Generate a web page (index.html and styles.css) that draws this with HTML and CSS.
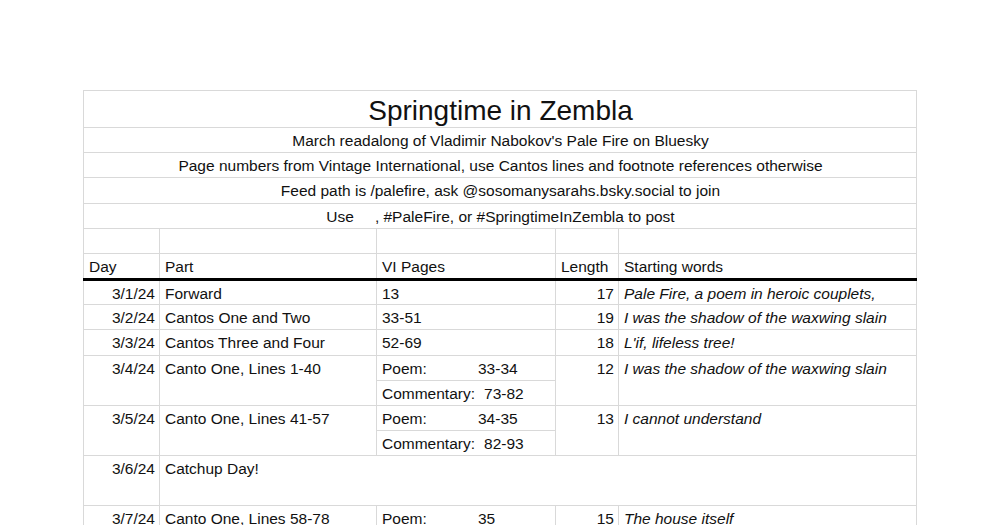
FILE: index.html
```html
<!DOCTYPE html>
<html lang="en">

<head>
  <meta charset="UTF-8">
  <meta name="viewport" content="width=device-width, initial-scale=1.0">
  <title>Springtime in Zembla</title>
  <link rel="stylesheet" href="styles.css">
</head>

<body>
  <div class="sheet">
    <table class="schedule">
      <colgroup>
        <col class="col-day">
        <col class="col-part">
        <col class="col-pages">
        <col class="col-length">
        <col class="col-words">
      </colgroup>
      <tr class="title-row">
        <td colspan="5" class="center title">Springtime in Zembla</td>
      </tr>
      <tr>
        <td colspan="5" class="center">March readalong of Vladimir Nabokov's Pale Fire on Bluesky</td>
      </tr>
      <tr>
        <td colspan="5" class="center">Page numbers from Vintage International, use Cantos lines and footnote references otherwise</td>
      </tr>
      <tr>
        <td colspan="5" class="center">Feed path is /palefire, ask @sosomanysarahs.bsky.social to join</td>
      </tr>
      <tr>
        <td colspan="5" class="center">Use<span class="emoji-gap"></span>, #PaleFire, or #SpringtimeInZembla to post</td>
      </tr>
      <tr>
        <td></td><td></td><td></td><td></td><td></td>
      </tr>
      <tr class="header-row">
        <td>Day</td>
        <td>Part</td>
        <td>VI Pages</td>
        <td>Length</td>
        <td>Starting words</td>
      </tr>

      <tr>
        <td class="right">3/1/24</td>
        <td>Forward</td>
        <td>13</td>
        <td class="right">17</td>
        <td class="words">Pale Fire, a poem in heroic couplets,</td>
      </tr>
      <tr>
        <td class="right">3/2/24</td>
        <td>Cantos One and Two</td>
        <td>33-51</td>
        <td class="right">19</td>
        <td class="words">I was the shadow of the waxwing slain</td>
      </tr>
      <tr>
        <td class="right">3/3/24</td>
        <td>Cantos Three and Four</td>
        <td>52-69</td>
        <td class="right">18</td>
        <td class="words">L'if, lifeless tree!</td>
      </tr>

      <!-- days with poem + commentary take two lines -->
      <tr>
        <td rowspan="2" class="right">3/4/24</td>
        <td rowspan="2">Canto One, Lines 1-40</td>
        <td><span class="label">Poem:</span>33-34</td>
        <td rowspan="2" class="right">12</td>
        <td rowspan="2" class="words">I was the shadow of the waxwing slain</td>
      </tr>
      <tr>
        <td><span class="label">Commentary:</span>73-82</td>
      </tr>
      <tr>
        <td rowspan="2" class="right">3/5/24</td>
        <td rowspan="2">Canto One, Lines 41-57</td>
        <td><span class="label">Poem:</span>34-35</td>
        <td rowspan="2" class="right">13</td>
        <td rowspan="2" class="words">I cannot understand</td>
      </tr>
      <tr>
        <td><span class="label">Commentary:</span>82-93</td>
      </tr>

      <tr class="tall-row">
        <td class="right">3/6/24</td>
        <td colspan="4">Catchup Day!</td>
      </tr>

      <tr>
        <td class="right">3/7/24</td>
        <td>Canto One, Lines 58-78</td>
        <td><span class="label">Poem:</span>35</td>
        <td class="right">15</td>
        <td class="words">The house itself</td>
      </tr>
    </table>
  </div>
</body>

</html>
```

FILE: styles.css
```css
body {
  margin: 0;
  background-color: white;
  color: #111;
  font-family: "Liberation Sans", Arial, sans-serif;
  overflow: hidden;
}

.sheet {
  padding-top: 90px;
}

.schedule {
  margin: 0 auto;
  width: 833px;
  table-layout: fixed;
  border-collapse: collapse;
  font-size: 15.5px;
  line-height: 17px;
}

.col-day { width: 76px; }
.col-part { width: 217px; }
.col-pages { width: 179px; }
.col-length { width: 63px; }
.col-words { width: 298px; }

.schedule tr {
  height: 25.2px;
}

.schedule td {
  border: 1px solid #d9d9d9;
  padding: 4px 4px 0 5px;
  vertical-align: top;
  white-space: nowrap;
  overflow: hidden;
}

.schedule .title-row {
  height: 37px;
}

.title {
  font-size: 28px;
  line-height: 32px;
  padding-top: 3px;
}

.center {
  text-align: center;
}

.right {
  text-align: right;
}

.words {
  font-style: italic;
}

/* emoji in the original sheet did not render, keep its space */
.emoji-gap {
  display: inline-block;
  width: 21px;
}

.schedule .header-row {
  height: 26px;
}

.header-row td {
  border-bottom: 3px solid #000;
}

.label {
  display: inline-block;
  min-width: 87px;
  padding-right: 9px;
}

.schedule .tall-row {
  height: 50px;
}
```
